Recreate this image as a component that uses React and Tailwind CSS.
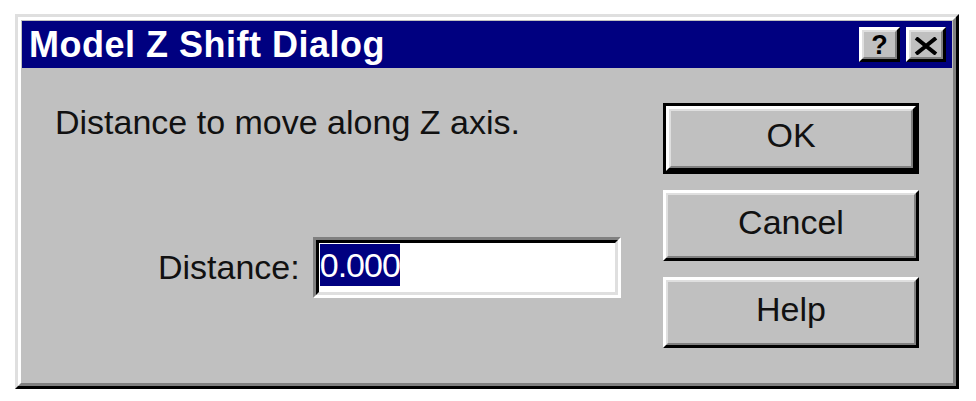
import React, { useState } from 'react';

// Win95 style bevel: outer + inner border pairs
const Bevel = ({ className = '', children }) => (
  <div className={`border-[3px] border-t-white border-l-white border-b-black border-r-black ${className}`}>
    <div className="h-full w-full border-[2px] border-t-[#dfdfdf] border-l-[#dfdfdf] border-b-[#808080] border-r-[#808080] bg-[#c0c0c0]">
      {children}
    </div>
  </div>
);

const DialogButton = ({ label, isDefault }) => {
  const inner = (
    <Bevel className="h-full w-full">
      <div className="flex h-full items-center justify-center pb-[6px] text-[34px] leading-[39px] text-[#111]">
        {label}
      </div>
    </Bevel>
  );

  if (isDefault) {
    return <div className="h-[71px] w-[256px] border-[3px] border-black">{inner}</div>;
  }
  return <div className="h-[71px] w-[256px]">{inner}</div>;
};

const TitleButton = ({ children, width }) => (
  <Bevel className={`h-[35px] ${width}`}>
    <div className="flex h-full items-center justify-center">{children}</div>
  </Bevel>
);

export default function App() {
  const [distance] = useState('0.000');

  return (
    <div className="min-h-[401px] w-[976px] bg-white pl-[15px] pt-[14px] font-['Liberation_Sans',Arial,sans-serif]">
      {/* window frame */}
      <div className="h-[375px] w-[944px] border-[3px] border-t-[#dfdfdf] border-l-[#dfdfdf] border-b-black border-r-black">
        <div className="flex h-full flex-col border-[3px] border-t-white border-l-white border-b-[#808080] border-r-[#808080] bg-[#c0c0c0] p-[1px]">
          {/* title bar */}
          <div className="flex h-[47px] shrink-0 items-center justify-between bg-[#000080] pl-[7px] pr-[6px]">
            <span className="text-[36px] font-bold leading-[41px] tracking-[0.5px] text-white">
              Model Z Shift Dialog
            </span>
            <div className="flex gap-[6px]">
              <TitleButton width="w-[41px]">
                <span className="pt-[2px] text-[27px] font-bold leading-none text-black">?</span>
              </TitleButton>
              <TitleButton width="w-[40px]">
                <svg width="24" height="18" viewBox="0 0 24 18" className="mt-[2px]">
                  <path d="M2 1 L22 17 M22 1 L2 17" stroke="black" strokeWidth="4" fill="none" />
                </svg>
              </TitleButton>
            </div>
          </div>

          {/* body */}
          <div className="flex flex-1 justify-between pl-[33px] pr-[33px] pt-[35px]">
            <div className="flex flex-col">
              <p className="text-[34px] leading-[39px] text-[#111]">Distance to move along Z axis.</p>
              <div className="ml-[103px] mt-[95px] flex items-center gap-[13px]">
                <span className="text-[34px] leading-[39px] text-[#111]">Distance:</span>
                <div className="h-[61px] w-[308px] border-[3px] border-t-[#808080] border-l-[#808080] border-b-white border-r-white">
                  <div className="h-full w-full border-[3px] border-t-black border-l-black border-b-[#dfdfdf] border-r-[#dfdfdf] bg-white pl-[1px] pt-[1px]">
                    <span className="inline-block h-[42px] bg-[#000080] text-[34px] leading-[42px] tracking-[-1px] text-white">
                      {distance}
                    </span>
                  </div>
                </div>
              </div>
            </div>

            <div className="flex flex-col gap-[16px]">
              <DialogButton label="OK" isDefault />
              <DialogButton label="Cancel" />
              <DialogButton label="Help" />
            </div>
          </div>
        </div>
      </div>
    </div>
  );
}
